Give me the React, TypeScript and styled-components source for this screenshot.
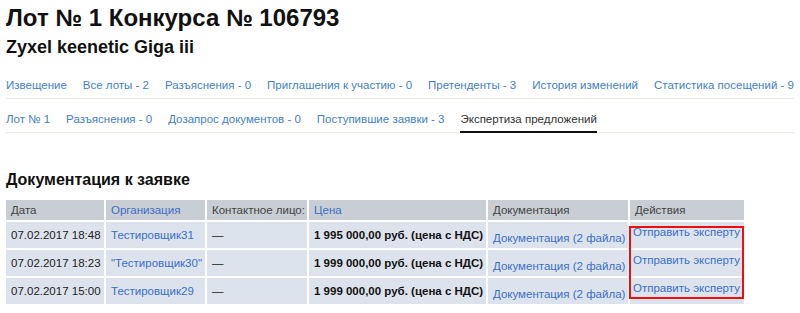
import React from 'react';
import styled, { createGlobalStyle } from 'styled-components';

const GlobalStyle = createGlobalStyle`
	html, body {
		margin: 0;
		padding: 0;
		background: #fff;
		font-family: Arial, "Liberation Sans", Helvetica, sans-serif;
		color: #222;
	}
`;

const topTabs = [
	'Извещение',
	'Все лоты - 2',
	'Разъяснения - 0',
	'Приглашения к участию - 0',
	'Претенденты - 3',
	'История изменений',
	'Статистика посещений - 9',
];

const lotTabs = [
	{ label: 'Лот № 1' },
	{ label: 'Разъяснения - 0' },
	{ label: 'Дозапрос документов - 0' },
	{ label: 'Поступившие заявки - 3' },
	{ label: 'Экспертиза предложений', active: true },
];

const rows = [
	{ date: '07.02.2017 18:48', org: 'Тестировщик31', price: '1 995 000,00 руб. (цена с НДС)' },
	{ date: '07.02.2017 18:23', org: '"Тестировщик30"', price: '1 999 000,00 руб. (цена с НДС)' },
	{ date: '07.02.2017 15:00', org: 'Тестировщик29', price: '1 999 000,00 руб. (цена с НДС)' },
];

// widths of the cells, without the 2px white spacing between them
const colWidths = [98, 99, 100, 177, 140, 114];

export default function App() {
	return (
		<>
			<GlobalStyle />
			<Page>
				<Title>Лот № 1 Конкурса № 106793</Title>
				<Subtitle>Zyxel keenetic Giga iii</Subtitle>

				<Tabs $first>
					{topTabs.map((t) => (
						<Tab key={t}>{t}</Tab>
					))}
				</Tabs>
				<Tabs>
					{lotTabs.map((t) => (
						<Tab key={t.label} $active={t.active}>{t.label}</Tab>
					))}
				</Tabs>

				<SectionTitle>Документация к заявке</SectionTitle>

				<TableWrap>
					<Table>
						<colgroup>
							{colWidths.map((w, i) => (
								<col key={i} style={{ width: w }} />
							))}
						</colgroup>
						<thead>
							<tr>
								<Th>Дата</Th>
								<Th $link>Организация</Th>
								<Th>Контактное лицо:</Th>
								<Th $link>Цена</Th>
								<Th>Документация</Th>
								<Th>Действия</Th>
							</tr>
						</thead>
						<tbody>
							{rows.map((r) => (
								<tr key={r.date}>
									<Td>{r.date}</Td>
									<Td><Link>{r.org}</Link></Td>
									<Td>—</Td>
									<Td><Price>{r.price}</Price></Td>
									<Td $align="low"><Link>Документация (2 файла)</Link></Td>
									<Td $align="high"><Link>Отправить эксперту</Link></Td>
								</tr>
							))}
						</tbody>
					</Table>
					<Highlight />
				</TableWrap>
			</Page>
		</>
	);
}

const Page = styled.div`
	width: 800px;
	height: 313px;
	padding: 4px 6px 0;
	box-sizing: border-box;
	overflow: hidden;
`;

const Title = styled.h1`
	margin: 0;
	font-size: 24px;
	line-height: 28px;
	font-weight: bold;
	color: #111;
`;

const Subtitle = styled.h2`
	margin: 4px 0 0;
	font-size: 18px;
	line-height: 22px;
	font-weight: bold;
	color: #111;
`;

const Tabs = styled.nav<{ $first?: boolean }>`
	display: flex;
	align-items: flex-end;
	gap: 16px;
	height: 33px;
	margin-top: ${(p) => (p.$first ? '7px' : '0')};
	border-bottom: 1px solid #ece9e0;
	white-space: nowrap;
`;

const Tab = styled.a<{ $active?: boolean }>`
	display: block;
	font-size: 11.5px;
	line-height: 14px;
	padding-bottom: 5px;
	margin-bottom: -1px;
	border-bottom: 2px solid ${(p) => (p.$active ? '#111' : 'transparent')};
	color: ${(p) => (p.$active ? '#333' : '#3f7fc6')};
	text-decoration: none;
	cursor: pointer;
`;

const SectionTitle = styled.h3`
	margin: 37px 0 0;
	font-size: 16px;
	line-height: 20px;
	font-weight: bold;
	color: #111;
`;

const TableWrap = styled.div`
	position: relative;
	margin-top: 10px;
	width: 738px;
`;

const Table = styled.table`
	margin: -2px;
	border-collapse: separate;
	border-spacing: 2px;
	table-layout: fixed;
	width: 742px;
	font-size: 11.5px;
`;

const Th = styled.th<{ $link?: boolean }>`
	background: #c9cdd4;
	height: 20px;
	padding: 0 5px;
	text-align: left;
	font-weight: normal;
	color: ${(p) => (p.$link ? '#3a6fc8' : '#444')};
	white-space: nowrap;
`;

const Td = styled.td<{ $align?: 'low' | 'high' }>`
	background: #dde3ec;
	height: 26px;
	box-sizing: border-box;
	padding: ${(p) => (p.$align === 'low' ? '5px 5px 0' : p.$align === 'high' ? '0 3px 6px' : '0 5px')};
	color: #222;
	white-space: nowrap;
	overflow: hidden;
`;

const Price = styled.b`
	font-weight: bold;
	color: #111;
`;

const Link = styled.a`
	color: #3a6fc8;
	text-decoration: none;
	cursor: pointer;
`;

const Highlight = styled.div`
	position: absolute;
	left: 623px;
	top: 28px;
	width: 115px;
	height: 73px;
	box-sizing: border-box;
	border: 2px solid #f20d0d;
	pointer-events: none;
`;
